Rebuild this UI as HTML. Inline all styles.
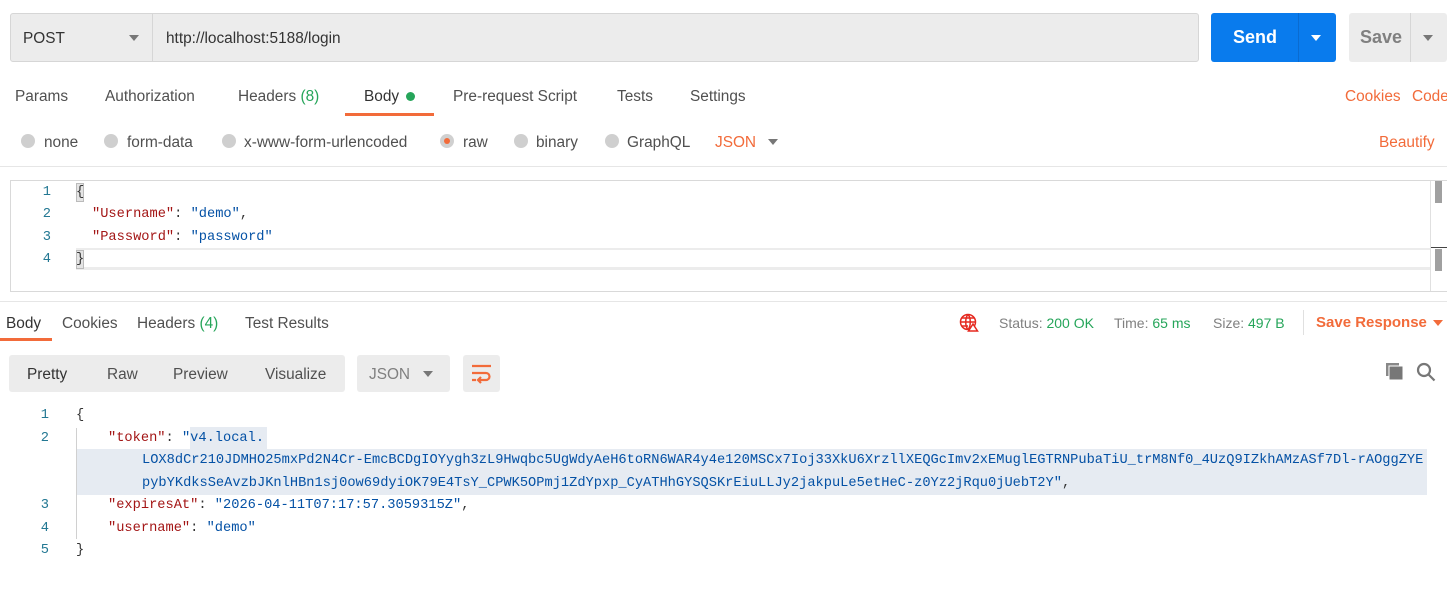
<!DOCTYPE html>
<html><head><meta charset="utf-8"><style>
*{margin:0;padding:0;box-sizing:border-box}
body{width:1447px;height:605px;overflow:hidden;background:#fff;font-family:"Liberation Sans",sans-serif;font-size:15.4px;color:#505050;position:relative}
.a{position:absolute;white-space:nowrap}
.mono{font-family:"Liberation Mono",monospace;font-size:13.7px}
.k{color:#a31515}.s{color:#0451a5}.p{color:#333}
.ln{color:#237893;width:20px;text-align:right}
.rad{width:14px;height:14px;border-radius:50%;background:#cfcfcf}
.tri{width:0;height:0;border-left:5px solid transparent;border-right:5px solid transparent;border-top:6px solid #777}
</style></head><body>
<div class="a" style="left:10px;top:13px;width:1189px;height:49px;background:#ececec;border:1px solid #d6d6d6;border-radius:3px"></div>
<div class="a" style="left:152px;top:14px;width:1px;height:47px;background:#d6d6d6"></div>
<div class="a" style="left:23px;top:30px;color:#333">POST</div>
<div class="a tri" style="left:129px;top:35px"></div>
<div class="a" style="left:166px;top:30px;color:#333">http://localhost:5188/login</div>
<div class="a" style="left:1211px;top:13px;width:125px;height:49px;background:#097bed;border-radius:3px"></div>
<div class="a" style="left:1298px;top:13px;width:1px;height:49px;background:#0a6bd0"></div>
<div class="a" style="left:1233px;top:27px;color:#fff;font-weight:bold;font-size:18px">Send</div>
<div class="a tri" style="left:1311px;top:35px;border-top-color:#fff"></div>
<div class="a" style="left:1349px;top:13px;width:98px;height:49px;background:#ececec;border-radius:3px"></div>
<div class="a" style="left:1410px;top:13px;width:1px;height:49px;background:#d6d6d6"></div>
<div class="a" style="left:1360px;top:27px;color:#808080;font-weight:bold;font-size:18px">Save</div>
<div class="a tri" style="left:1423px;top:35px"></div>
<div class="a" style="left:15px;top:88px">Params</div>
<div class="a" style="left:105px;top:88px">Authorization</div>
<div class="a" style="left:238px;top:88px">Headers <span style="color:#26a55a">(8)</span></div>
<div class="a" style="left:364px;top:88px;color:#333">Body</div>
<div class="a" style="left:406px;top:92px;width:9px;height:9px;border-radius:50%;background:#26a55a"></div>
<div class="a" style="left:345px;top:113px;width:89px;height:3px;background:#f26b3a"></div>
<div class="a" style="left:453px;top:88px">Pre-request Script</div>
<div class="a" style="left:617px;top:88px">Tests</div>
<div class="a" style="left:690px;top:88px">Settings</div>
<div class="a" style="left:1345px;top:88px;color:#f26b3a">Cookies</div>
<div class="a" style="left:1412px;top:88px;color:#f26b3a">Code</div>
<div class="a rad" style="left:21px;top:134px"></div><div class="a" style="left:44px;top:134px">none</div>
<div class="a rad" style="left:104px;top:134px"></div><div class="a" style="left:127px;top:134px">form-data</div>
<div class="a rad" style="left:222px;top:134px"></div><div class="a" style="left:244px;top:134px">x-www-form-urlencoded</div>
<div class="a rad" style="left:440px;top:134px;background:#d0d0d0"></div><div class="a" style="left:444px;top:138px;width:6px;height:6px;border-radius:50%;background:#f26b3a"></div>
<div class="a" style="left:463px;top:134px">raw</div>
<div class="a rad" style="left:514px;top:134px"></div><div class="a" style="left:536px;top:134px">binary</div>
<div class="a rad" style="left:605px;top:134px"></div><div class="a" style="left:627px;top:134px">GraphQL</div>
<div class="a" style="left:715px;top:134px;color:#f26b3a">JSON</div>
<div class="a tri" style="left:768px;top:139px"></div>
<div class="a" style="left:1379px;top:134px;color:#f26b3a">Beautify</div>
<div class="a" style="left:0;top:166px;width:1447px;height:1px;background:#e6e6e6"></div>
<div class="a" style="left:10px;top:180px;width:1440px;height:112px;border:1px solid #d9d9d9;border-right:none"></div>
<div class="a" style="left:76px;top:248px;width:1355px;height:2px;background:#ececec"></div>
<div class="a" style="left:76px;top:267px;width:1355px;height:3px;background:#ececec"></div>
<div class="a" style="left:1430px;top:181px;width:1px;height:110px;background:#e0e0e0"></div>
<div class="a" style="left:1435px;top:181px;width:7px;height:22px;background:#a0a0a0"></div>
<div class="a" style="left:1431px;top:247px;width:16px;height:1px;background:#444"></div>
<div class="a" style="left:1435px;top:249px;width:7px;height:22px;background:#a0a0a0"></div>
<div class="a mono ln" style="left:31px;top:185px">1</div>
<div class="a mono ln" style="left:31px;top:207px">2</div>
<div class="a mono ln" style="left:31px;top:230px">3</div>
<div class="a mono ln" style="left:31px;top:252px">4</div>
<div class="a" style="left:76px;top:183px;width:8px;height:19px;background:#e4e4e4;border:1px solid #bbb"></div>
<div class="a" style="left:76px;top:250px;width:8px;height:19px;background:#e4e4e4;border:1px solid #bbb"></div>
<div class="a mono p" style="left:76px;top:185px">{</div>
<div class="a mono" style="left:92px;top:207px"><span class="k">"Username"</span><span class="p">: </span><span class="s">"demo"</span><span class="p">,</span></div>
<div class="a mono" style="left:92px;top:230px"><span class="k">"Password"</span><span class="p">: </span><span class="s">"password"</span></div>
<div class="a mono p" style="left:76px;top:252px">}</div>
<div class="a" style="left:0;top:301px;width:1447px;height:1px;background:#e6e6e6"></div>
<div class="a" style="left:6px;top:315px;color:#333">Body</div>
<div class="a" style="left:0;top:338px;width:52px;height:3px;background:#f26b3a"></div>
<div class="a" style="left:62px;top:315px">Cookies</div>
<div class="a" style="left:137px;top:315px">Headers <span style="color:#26a55a">(4)</span></div>
<div class="a" style="left:245px;top:315px">Test Results</div>
<svg class="a" style="left:959px;top:313px" width="20" height="20" viewBox="0 0 20 20" fill="none" stroke="#e5281f" stroke-width="1.5"><circle cx="9" cy="9" r="7.5"/><path d="M1.5 9h15M9 1.5c-3 3-3 12 0 15M9 1.5c3 3 3 12 0 15M3 5h12M3 13h6"/><path d="M14 11l4.5 7h-9z" fill="#fff"/></svg>
<div class="a" style="left:999px;top:315px;font-size:14px;color:#808080">Status: <span style="color:#26a55a">200 OK</span></div>
<div class="a" style="left:1114px;top:315px;font-size:14px;color:#808080">Time: <span style="color:#26a55a">65 ms</span></div>
<div class="a" style="left:1213px;top:315px;font-size:14px;color:#808080">Size: <span style="color:#26a55a">497 B</span></div>
<div class="a" style="left:1303px;top:310px;width:1px;height:25px;background:#e0e0e0"></div>
<div class="a" style="left:1316px;top:314px;color:#f26b3a;font-weight:bold;font-size:15px">Save Response</div>
<div class="a tri" style="left:1433px;top:320px;border-top-color:#f26b3a"></div>
<div class="a" style="left:9px;top:355px;width:336px;height:37px;background:#ececec;border-radius:3px"></div>
<div class="a" style="left:27px;top:366px;color:#333">Pretty</div>
<div class="a" style="left:107px;top:366px">Raw</div>
<div class="a" style="left:173px;top:366px">Preview</div>
<div class="a" style="left:265px;top:366px">Visualize</div>
<div class="a" style="left:357px;top:355px;width:93px;height:37px;background:#ececec;border-radius:3px"></div>
<div class="a" style="left:369px;top:366px;color:#808080">JSON</div>
<div class="a tri" style="left:423px;top:371px"></div>
<div class="a" style="left:463px;top:355px;width:37px;height:37px;background:#ececec;border-radius:3px"></div>
<svg class="a" style="left:471px;top:364px" width="22" height="20" viewBox="0 0 22 20" fill="none" stroke="#f26b3a" stroke-width="2.2"><path d="M1 2h19M1 9h14a3.5 3.5 0 0 1 0 7H8M1 16h4M10 13l-3 3 3 3"/></svg>
<svg class="a" style="left:1385px;top:362px" width="20" height="20" viewBox="0 0 20 20"><rect x="1" y="1" width="13" height="13" fill="#888"/><rect x="4" y="4" width="14" height="14" fill="#777" stroke="#fff" stroke-width="1"/></svg>
<svg class="a" style="left:1416px;top:362px" width="20" height="20" viewBox="0 0 20 20" fill="none" stroke="#777" stroke-width="2.2"><circle cx="8" cy="8" r="6"/><path d="M12.5 12.5l6 6"/></svg>
<div class="a" style="left:190px;top:427px;width:77px;height:23px;background:#e6ebf2"></div>
<div class="a" style="left:76px;top:449px;width:1351px;height:46px;background:#e6ebf2"></div>
<div class="a" style="left:76px;top:428px;width:1px;height:111px;background:#d0d0d0"></div>
<div class="a mono ln" style="left:29px;top:408px">1</div>
<div class="a mono ln" style="left:29px;top:431px">2</div>
<div class="a mono ln" style="left:29px;top:498px">3</div>
<div class="a mono ln" style="left:29px;top:521px">4</div>
<div class="a mono ln" style="left:29px;top:543px">5</div>
<div class="a mono p" style="left:76px;top:408px">{</div>
<div class="a mono" style="left:108px;top:431px"><span class="k">"token"</span><span class="p">: </span><span class="s">"v4.local.</span></div>
<div class="a mono s" style="left:142px;top:453px">LOX8dCr210JDMHO25mxPd2N4Cr-EmcBCDgIOYygh3zL9Hwqbc5UgWdyAeH6toRN6WAR4y4e120MSCx7Ioj33XkU6XrzllXEQGcImv2xEMuglEGTRNPubaTiU_trM8Nf0_4UzQ9IZkhAMzASf7Dl-rAOggZYE</div>
<div class="a mono" style="left:142px;top:476px"><span class="s">pybYKdksSeAvzbJKnlHBn1sj0ow69dyiOK79E4TsY_CPWK5OPmj1ZdYpxp_CyATHhGYSQSKrEiuLLJy2jakpuLe5etHeC-z0Yz2jRqu0jUebT2Y"</span><span class="p">,</span></div>
<div class="a mono" style="left:108px;top:498px"><span class="k">"expiresAt"</span><span class="p">: </span><span class="s">"2026-04-11T07:17:57.3059315Z"</span><span class="p">,</span></div>
<div class="a mono" style="left:108px;top:521px"><span class="k">"username"</span><span class="p">: </span><span class="s">"demo"</span></div>
<div class="a mono p" style="left:76px;top:543px">}</div>
</body></html>
